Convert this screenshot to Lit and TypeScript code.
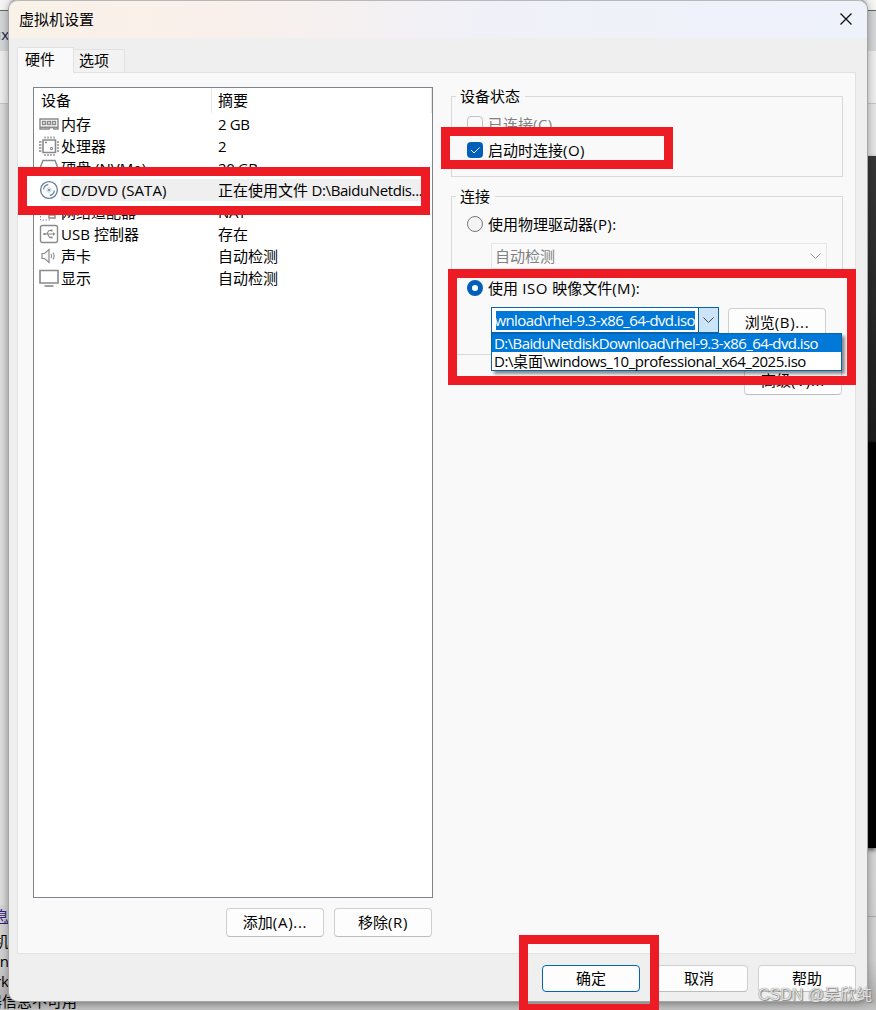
import { LitElement, html, css, svg } from "lit";
import { customElement, property } from "lit/decorators.js";

// latin runs get their own span so they can be tracked apart from the chinese text
const mixed = (text: string) =>
  text
    .split(/([\x20-\x7e]+)/)
    .filter((part) => part !== "")
    .map((part) =>
      /^[\x20-\x7e]/.test(part)
        ? html`<span class="latin ${part.length > 15 ? "path" : ""}">${part}</span>`
        : part
    );

const icons: Record<string, unknown> = {
  memory: svg`<path d="M1 5h18v10h-4l-1-1.500h-3l-1 1.500H1zM1 13.200h18" />
    <path d="M3.500 7.500h3v3h-3zM8.500 7.500h3v3h-3zM13.500 7.500h3v3h-3z" />`,
  cpu: svg`<path d="M4 4h12.500v12.500H4z" stroke-width="1.600" />
    <path d="M6 .5v2M9 .5v2M12 .5v2M15 .5v2M6 18v2M9 18v2M12 18v2M15 18v2M0 6h2.500M0 9h2.500M0 12h2.500M0 15h2.500M18 6h2M18 9h2M18 12h2M18 15h2" stroke-width="1.300" />
    <path d="M6 6.500h2M7 5.500v2M11.500 11.500h2v2h-2z" stroke-width="1" />`,
  disk: svg`<path d="M1.500 17V9L4 2.500h12L18.500 9v8zM1.500 10h17" />`,
  cd: svg`<g stroke="#5d7f94"><circle cx="10" cy="10" r="8.400" stroke-width="1.300" />
    <circle cx="10" cy="10" r="2.200" stroke="#a9c0ce" stroke-width=".8" />
    <circle cx="10" cy="10" r="1.100" fill="#5d7f94" stroke="none" />
    <path d="M4.600 9.300a5.500 5.500 0 0 1 4.700-4.700M15.400 10.700a5.500 5.500 0 0 1-4.700 4.700" stroke-width="1.200" /></g>`,
  net: svg`<path d="M1.500 2.500h10v7h-10zM13 9v4M10 13h6v3h-6z" />
    <path d="M1.500 11v7h11" stroke-dasharray="1.500 1.500" stroke-width="1" />`,
  usb: svg`<rect x="1.500" y="1.500" width="17" height="17" rx="2" />
    <path d="M4.500 10h10M7.500 10l2.500-3.500h2M8.500 10l2 3.500h2" stroke-width="1.100" />
    <path d="M14 8.200l2.500 1.800-2.500 1.800zM11.500 5.500h2v2h-2zM11.500 12.500h2v2h-2zM4.500 9h2v2h-2z" fill="#888" stroke="none" />`,
  sound: svg`<path d="M3 7.500h2.500L10 3.500v13l-4.500-4H3z" stroke-width="1.200" />
    <path d="M12 8q1.200 2 0 4M14 6.500q2.300 3.500 0 7" stroke-width="1.100" />`,
  display: svg`<path d="M1 2.500h18v12.500H1z" stroke-width="1.600" /><path d="M5.500 18h9" stroke-width="1.600" />`,
};

const devices = [
  { icon: "memory", name: "内存", summary: "2 GB" },
  { icon: "cpu", name: "处理器", summary: "2" },
  { icon: "disk", name: "硬盘 (NVMe)", summary: "20 GB" },
  { icon: "cd", name: "CD/DVD (SATA)", summary: "正在使用文件 D:\\BaiduNetdis...", selected: true },
  { icon: "net", name: "网络适配器", summary: "NAT" },
  { icon: "usb", name: "USB 控制器", summary: "存在" },
  { icon: "sound", name: "声卡", summary: "自动检测" },
  { icon: "display", name: "显示", summary: "自动检测" },
];

@customElement("push-button")
export class PushButton extends LitElement {
  @property() label = "";

  static styles = css`
    :host {
      display: inline-flex;
      box-sizing: border-box;
      width: 98px;
      height: 29px;
      padding-bottom: 2px;
      align-items: center;
      justify-content: center;
      background: #fdfdfd;
      border: 1px solid #d0d0d0;
      border-bottom-color: #bdbdbd;
      border-radius: 4px;
    }
    :host([primary]) {
      border-color: #0067b0;
    }
    .latin {
      letter-spacing: 0.7px;
    }
  `;

  render() {
    return html`<span>${mixed(this.label)}</span>`;
  }
}

@customElement("app-root")
export class AppRoot extends LitElement {
  static styles = css`
    :host {
      display: block;
      position: relative;
      width: 876px;
      height: 1010px;
      overflow: hidden;
      font-family: "Open Sans", "Noto Sans CJK SC", sans-serif;
      font-size: 15px;
      line-height: 22px;
      color: #000;
      white-space: nowrap;
    }
    .latin {
      white-space: pre;
    }
    /* the window behind the dialog */
    .backdrop {
      display: flex;
      justify-content: space-between;
      height: 1010px;
      background: linear-gradient(#e9e9e9 0, #e4e4e4 500px, #cfcfcf 960px, #b0b0b0 1001px, #c2c2c2 1010px);
    }
    .strip {
      width: 9px;
      display: flex;
      flex-direction: column;
    }
    .strip .top {
      height: 10px;
      background: #f4f4f4;
      border-bottom: 1px solid #666;
    }
    .strip .band {
      height: 40px;
      line-height: 46px;
      background: #d3d4d6;
      direction: rtl;
      color: #2a1a4a;
    }
    .strip .gap {
      height: 52px;
      background: #ececec;
      border-bottom: 1px solid #c4c4c4;
    }
    .left .fill {
      height: 804px;
      background: linear-gradient(90deg, #dedede, #d0d0d0);
    }
    .right .fill {
      height: 52px;
      background: #e3e3e3;
    }
    .right .screen {
      height: 692px;
      background: linear-gradient(#363636, #1c1c1c 285px, #000 287px);
      box-shadow: 0 2px 4px #555;
    }
    .right .tail {
      height: 68px;
      border-bottom: 1px solid #aaa;
    }
    .left .line {
      height: 20px;
      display: flex;
      justify-content: flex-end;
    }
    .left .link {
      height: 25px;
      color: #35217e;
      text-decoration: underline;
    }
    .left .last {
      justify-content: flex-start;
      text-indent: -13px;
    }
    .dialog {
      position: absolute;
      left: 9px;
      top: 0;
      width: 858px;
      height: 1001px;
      display: flex;
      flex-direction: column;
      background: #efefef;
      border-radius: 9px;
      box-shadow: 0 0 0 1px #a5a5a5, 0 1px 8px rgba(0, 0, 0, 0.4);
    }
    .title {
      display: flex;
      align-items: center;
      justify-content: space-between;
      height: 38px;
      padding: 0 15px 2px 10px;
      border-radius: 9px 9px 0 0;
      border-top: 1px solid #b9b9b9;
      box-sizing: border-box;
      background: linear-gradient(90deg, #f9f2e8, #f9f0eb 25%, #f0f1f8 55%, #eef2fb);
    }
    .title svg {
      width: 12px;
      height: 12px;
      stroke: #111;
      stroke-width: 1.3;
    }
    .tabs {
      display: flex;
      align-items: flex-end;
      height: 34px;
      padding-left: 8px;
    }
    .tab {
      box-sizing: border-box;
      width: 51px;
      height: 23px;
      padding-left: 5px;
      line-height: 21px;
      border: 1px solid #e2e2e2;
      border-width: 1px 1px 0 0;
      background: #f2f2f2;
    }
    .tab.active {
      width: 57px;
      height: 26px;
      margin-bottom: -1px;
      padding-left: 7px;
      line-height: 22px;
      border-left-width: 1px;
      background: #f9f9f9;
      z-index: 0;
    }
    .page {
      display: flex;
      gap: 18px;
      box-sizing: border-box;
      height: 882px;
      margin: 0 11px 0 8px;
      padding: 14px 13px 0 15px;
      background: #f9f9f9;
      border: 1px solid #e2e2e2;
    }
    .list {
      box-sizing: border-box;
      width: 400px;
      height: 811px;
      background: #fff;
      border: 1px solid #7f858d;
    }
    .header {
      display: flex;
      height: 25px;
      line-height: 24px;
    }
    .header div {
      box-sizing: border-box;
      width: 178px;
      padding-left: 7px;
      border-right: 1px solid #e4e4e4;
    }
    .header div + div {
      width: 220px;
      padding-left: 6px;
    }
    .device {
      display: flex;
      height: 22px;
      width: 387px;
      padding-left: 5px;
      box-sizing: border-box;
    }
    .device.selected {
      position: relative;
      z-index: 2;
    }
    .device svg {
      flex: none;
      width: 20px;
      height: 20px;
      margin: 1px 2px 0 0;
      fill: none;
      stroke: #8a8a8a;
      stroke-width: 1.4;
    }
    .cells {
      flex: 1;
      display: flex;
      overflow: hidden;
    }
    .selected .cells {
      background: #efefef;
    }
    .name {
      width: 157px;
      flex: none;
    }
    .name .latin {
      letter-spacing: 0.05px;
    }
    .summary .latin {
      letter-spacing: -0.4px;
    }
    .actions {
      display: flex;
      justify-content: flex-end;
      gap: 10px;
      margin: 10px 1px 0 0;
    }
    .settings {
      width: 392px;
    }
    fieldset {
      box-sizing: border-box;
      position: relative;
      width: 392px;
      height: 90px;
      margin: 0;
      padding: 6px 15px 0;
      border: 1px solid #d9d9d9;
    }
    fieldset + fieldset {
      height: 168px;
      margin-top: 10px;
    }
    /* the frame is interrupted beside the marked area */
    fieldset + fieldset::after {
      content: "";
      position: absolute;
      right: -1px;
      bottom: 0;
      width: 1px;
      height: 76px;
      background: #f9f9f9;
    }
    legend {
      height: 18px;
      line-height: 18px;
      padding: 0 5px 0 4px;
      margin-left: -11px;
    }
    .option {
      display: flex;
      align-items: center;
      gap: 5px;
      height: 26px;
    }
    .option .latin {
      letter-spacing: 0.45px;
    }
    .option.disabled {
      color: #808080;
    }
    .option.raised {
      position: relative;
      z-index: 2;
    }
    .check,
    .radio {
      box-sizing: border-box;
      width: 16px;
      height: 16px;
      border: 1px solid #c3c3c3;
      border-radius: 4px;
    }
    .check.on {
      border: 0;
      background: #005fb8;
    }
    .check svg {
      display: block;
      width: 16px;
      height: 16px;
      fill: none;
      stroke: #fff;
    }
    .radio {
      border-color: #777;
      border-radius: 50%;
      background: #f4f4f4;
    }
    .radio.on {
      border: 5px solid #005fb8;
      background: #fff;
    }
    .combo {
      box-sizing: border-box;
      display: flex;
      width: 336px;
      height: 26px;
      margin: 6px 0 6px 24px;
      align-items: center;
      justify-content: space-between;
      padding: 0 5px 0 3px;
      border: 1px solid #e6e6e6;
      background: #fafafa;
      color: #808080;
    }
    .chevron {
      width: 11px;
      height: 6px;
      fill: none;
      stroke: #999;
    }
    .iso {
      display: flex;
      gap: 9px;
      margin: 6px 0 0 24px;
      position: relative;
    }
    .edit {
      box-sizing: border-box;
      display: flex;
      width: 228px;
      height: 26px;
      padding-left: 4px;
      align-items: center;
      justify-content: space-between;
      border: 1px solid #0a64ad;
      background: #fff;
    }
    .value {
      display: flex;
      justify-content: flex-end;
      width: 199px;
      height: 19px;
      line-height: 18px;
      overflow: hidden;
      background: #0078d7;
      color: #fff;
    }
    .drop {
      display: flex;
      align-items: center;
      justify-content: center;
      width: 19px;
      height: 24px;
      border-left: 1px solid #0a64ad;
      background: #cce4f7;
    }
    .drop .chevron {
      stroke: #444;
    }
    .iso push-button {
      margin-top: 1px;
    }
    .menu {
      position: absolute;
      left: 0;
      top: 26px;
      z-index: 1;
      width: 349px;
      border: 1px solid #0a64ad;
      background: #fff;
      box-shadow: 3px 3px 3px rgba(0, 0, 0, 0.45);
    }
    .menu div {
      height: 18px;
      line-height: 18px;
      padding-left: 2px;
    }
    .menu .active {
      background: #0078d7;
      color: #fff;
    }
    .menu .latin {
      letter-spacing: -0.46px;
    }
    .active .path,
    .value .path {
      letter-spacing: -0.59px;
    }
    .advanced {
      display: flex;
      justify-content: flex-end;
      margin: 11px 1px 0 0;
    }
    .footer {
      display: flex;
      justify-content: flex-end;
      gap: 10px;
      padding: 11px 11px 0 0;
    }
    .footer push-button {
      height: 27px;
    }
    .callout {
      position: absolute;
      box-sizing: border-box;
      border: 9px solid #ed1c24;
      z-index: 1;
    }
    .c1 {
      left: 18px;
      top: 167px;
      width: 412px;
      height: 48px;
      background: #fff;
    }
    .c2 {
      left: 441px;
      top: 127px;
      width: 232px;
      height: 42px;
      background: #f9f9f9;
    }
    .c3 {
      left: 448px;
      top: 269px;
      width: 408px;
      height: 116px;
    }
    .c4 {
      left: 519px;
      top: 935px;
      width: 140px;
      height: 78px;
    }
    .watermark {
      position: absolute;
      left: 758px;
      top: 984px;
      z-index: 3;
      font: 16px/22px "Liberation Sans", "Noto Sans CJK SC", sans-serif;
      color: rgba(240, 240, 240, 0.9);
      text-shadow: 0 0 1px #666, 1px 1px 1px #888;
    }
  `;

  renderBackdrop() {
    return html`
      <div class="backdrop">
        <div class="strip left">
          <div class="top"></div>
          <div class="band">ux</div>
          <div class="gap"></div>
          <div class="fill"></div>
          <div class="line link">息</div>
          <div class="line">主机</div>
          <div class="line">Lin</div>
          <div class="line">rk</div>
          <div class="line last">器信息不可用</div>
        </div>
        <div class="strip right">
          <div class="top"></div>
          <div class="band"></div>
          <div class="gap"></div>
          <div class="fill"></div>
          <div class="screen"></div>
          <div class="tail"></div>
        </div>
      </div>
    `;
  }

  renderDevices() {
    return html`
      <div class="list">
        <div class="header">
          <div>设备</div>
          <div>摘要</div>
        </div>
        ${devices.map(
          (d) => html`
            <div class="device ${d.selected ? "selected" : ""}">
              <svg viewBox="0 0 20 20">${icons[d.icon]}</svg>
              <div class="cells">
                <div class="name">${mixed(d.name)}</div>
                <div class="summary">${mixed(d.summary)}</div>
              </div>
            </div>
          `
        )}
      </div>
    `;
  }

  renderSettings() {
    const chevron = html`<svg class="chevron" viewBox="0 0 11 6"><path d="M.5.5l5 5 5-5" /></svg>`;
    return html`
      <div class="settings">
        <fieldset>
          <legend>设备状态</legend>
          <div class="option disabled"><span class="check"></span><span>${mixed("已连接(C)")}</span></div>
          <div class="option raised">
            <span class="check on"><svg viewBox="0 0 16 16"><path d="M4 8l3 3 5.500-5.500" /></svg></span>
            <span>${mixed("启动时连接(O)")}</span>
          </div>
        </fieldset>
        <fieldset>
          <legend>连接</legend>
          <div class="option"><span class="radio"></span><span>${mixed("使用物理驱动器(P):")}</span></div>
          <div class="combo"><span>自动检测</span>${chevron}</div>
          <div class="option"><span class="radio on"></span><span>${mixed("使用 ISO 映像文件(M):")}</span></div>
          <div class="iso">
            <div class="edit">
              <div class="value">${mixed("D:\\BaiduNetdiskDownload\\rhel-9.3-x86_64-dvd.iso")}</div>
              <div class="drop">${chevron}</div>
            </div>
            <push-button label="浏览(B)..."></push-button>
            <div class="menu">
              <div class="active">${mixed("D:\\BaiduNetdiskDownload\\rhel-9.3-x86_64-dvd.iso")}</div>
              <div>${mixed("D:\\桌面\\windows_10_professional_x64_2025.iso")}</div>
            </div>
          </div>
        </fieldset>
        <div class="advanced"><push-button label="高级(V)..."></push-button></div>
      </div>
    `;
  }

  render() {
    return html`
      ${this.renderBackdrop()}
      <div class="dialog">
        <div class="title">
          <span>虚拟机设置</span>
          <svg viewBox="0 0 12 12"><path d="M.5.5l11 11M11.500.5l-11 11" /></svg>
        </div>
        <div class="tabs">
          <div class="tab active">硬件</div>
          <div class="tab">选项</div>
        </div>
        <div class="page">
          <div>
            ${this.renderDevices()}
            <div class="actions">
              <push-button label="添加(A)..."></push-button>
              <push-button label="移除(R)"></push-button>
            </div>
          </div>
          ${this.renderSettings()}
        </div>
        <div class="footer">
          <push-button primary label="确定"></push-button>
          <push-button label="取消"></push-button>
          <push-button label="帮助"></push-button>
        </div>
      </div>
      <div class="callout c1"></div>
      <div class="callout c2"></div>
      <div class="callout c3"></div>
      <div class="callout c4"></div>
      <div class="watermark">CSDN @吴欣纯</div>
    `;
  }
}
